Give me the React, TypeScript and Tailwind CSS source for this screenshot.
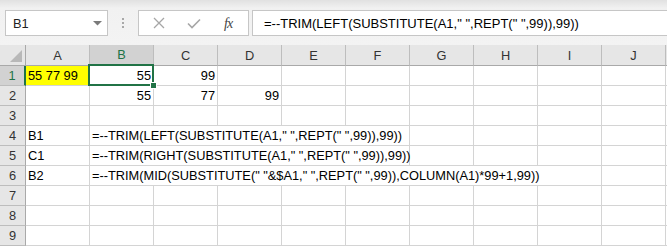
import React from 'react';

const cols = ['A', 'B', 'C', 'D', 'E', 'F', 'G', 'H', 'I', 'J'];

type Cell = { text?: string; span?: string; right?: boolean; bg?: string };

// one entry per row; a cell with span swallows the following empty columns
const rows: Cell[][] = [
  [{ text: '55 77 99', bg: 'bg-[#ffff00]' }, { text: '55', right: true }, { text: '99', right: true }, {}, {}, {}, {}, {}, {}, {}],
  [{}, { text: '55', right: true }, { text: '77', right: true }, { text: '99', right: true }, {}, {}, {}, {}, {}, {}],
  [{}, {}, {}, {}, {}, {}, {}, {}, {}, {}],
  [{ text: 'B1' }, { text: '=--TRIM(LEFT(SUBSTITUTE(A1," ",REPT(" ",99)),99))', span: 'col-span-5' }, {}, {}, {}, {}],
  [{ text: 'C1' }, { text: '=--TRIM(RIGHT(SUBSTITUTE(A1," ",REPT(" ",99)),99))', span: 'col-span-5' }, {}, {}, {}, {}],
  [{ text: 'B2' }, { text: '=--TRIM(MID(SUBSTITUTE(" "&$A1," ",REPT(" ",99)),COLUMN(A1)*99+1,99))', span: 'col-span-8' }, {}],
  [{}, {}, {}, {}, {}, {}, {}, {}, {}, {}],
  [{}, {}, {}, {}, {}, {}, {}, {}, {}, {}],
  [{}, {}, {}, {}, {}, {}, {}, {}, {}, {}],
];

function FormulaBar() {
  return (
    <div className="h-[45px] bg-[#f3f3f3] bg-gradient-to-b from-[#e1e1e1] via-[#f1f1f1] via-[18%] to-[#f3f3f3] pt-[10px] pl-[5px] flex items-start">
      <div className="w-[103px] h-[26px] bg-white border border-[#c6c6c6] flex items-center justify-between pl-[7px] pr-[5px] text-[#222]">
        <span>B1</span>
        <svg width="9" height="5" viewBox="0 0 9 5"><path d="M0 0h9L4.5 4.5z" fill="#7a7a7a" /></svg>
      </div>
      <div className="w-[30px] h-[26px] flex flex-col items-center justify-center gap-[2px]">
        <span className="w-[2px] h-[2px] bg-[#a8a8a8]" />
        <span className="w-[2px] h-[2px] bg-[#a8a8a8]" />
        <span className="w-[2px] h-[2px] bg-[#a8a8a8]" />
      </div>
      <div className="w-[111px] h-[26px] bg-white border border-[#c6c6c6] flex items-center">
        <svg className="ml-[14px]" width="12" height="12" viewBox="0 0 12 12">
          <path d="M1 1l10 10M11 1L1 11" stroke="#a6a6a6" strokeWidth="1.3" fill="none" />
        </svg>
        <svg className="ml-[22px]" width="14" height="11" viewBox="0 0 14 11">
          <path d="M1 5.5l4 4L13 1.5" stroke="#a6a6a6" strokeWidth="1.6" fill="none" />
        </svg>
        <span className="ml-[23px] font-['Liberation_Serif',serif] italic text-[14px] text-[#444] tracking-[-1px]">fx</span>
      </div>
      <div className="ml-[3px] flex-1 h-[26px] bg-white border border-r-0 border-[#c6c6c6] flex items-center pl-[11px] text-[13px] text-black whitespace-nowrap">
        =--TRIM(LEFT(SUBSTITUTE(A1," ",REPT(" ",99)),99))
      </div>
    </div>
  );
}

export default function App() {
  return (
    <div className="w-[667px] h-[246px] overflow-hidden bg-white font-['Liberation_Sans',Arial,sans-serif] text-[12.8px] leading-[19px]">
      <FormulaBar />
      <div className="relative">
        {/* column headers */}
        <div className="grid grid-cols-[26px_repeat(10,64px)_1fr] h-[21px] bg-[#e6e6e6] text-[#333]">
          <div className="border-r border-b border-[#a9a9a9] flex items-end justify-end pr-[3px] pb-[3px]">
            <svg width="12" height="12" viewBox="0 0 12 12"><path d="M12 0v12H0z" fill="#b8b8b8" /></svg>
          </div>
          {cols.map(c => (
            <div
              key={c}
              className={
                c === 'B'
                  ? 'border-r border-r-[#bdbdbd] border-b-2 border-b-[#217346] bg-[#d2d2d2] text-[#217346] flex items-center justify-center'
                  : 'border-r border-r-[#bdbdbd] border-b border-b-[#a9a9a9] flex items-center justify-center'
              }
            >
              {c}
            </div>
          ))}
          <div className="border-b border-[#a9a9a9]" />
        </div>

        {rows.map((row, r) => (
          <div key={r} className="grid grid-cols-[26px_repeat(10,64px)_1fr] h-[20px]">
            <div
              className={
                r === 0
                  ? 'bg-[#d2d2d2] text-[#217346] border-r-2 border-r-[#217346] border-b border-b-[#bdbdbd] flex items-center justify-center'
                  : 'bg-[#e6e6e6] text-[#333] border-r border-r-[#a9a9a9] border-b border-b-[#bdbdbd] flex items-center justify-center'
              }
            >
              {r + 1}
            </div>
            {row.map((cell, i) => (
              <div
                key={i}
                className={`${cell.span ?? ''} ${cell.bg ?? ''} border-r border-b border-[#d4d4d4] whitespace-nowrap text-black ${
                  cell.right ? 'text-right pr-[2px]' : 'pl-[2px]'
                }`}
              >
                {cell.text}
              </div>
            ))}
            <div className="border-b border-[#d4d4d4]" />
          </div>
        ))}

        {/* active cell B1 */}
        <div className="absolute left-[88px] top-[19px] w-[66px] h-[22px] border-2 border-[#217346]" />
        <div className="absolute left-[150px] top-[37px] w-[7px] h-[7px] bg-[#217346] border border-white" />
      </div>
    </div>
  );
}
